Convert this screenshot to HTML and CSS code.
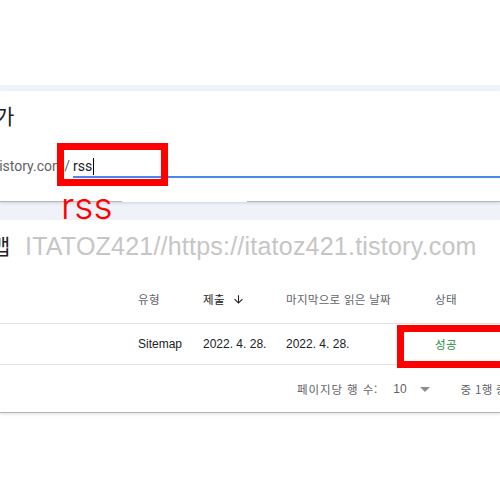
FILE: index.html
```html
<!DOCTYPE html>
<html lang="ko">
<head>
<meta charset="utf-8">
<title>Sitemaps</title>
<link rel="stylesheet" href="styles.css">
</head>
<body>
<div class="page">
  <div class="topspace"></div>
  <main class="stage">
    <section class="card card-add">
      <h2 class="card-title title-add">가</h2>
      <div class="input-row">
        <div class="prefix"><span>https://itatoz421.tistory.com/</span></div>
        <div class="field"><span class="value">rss</span><span class="caret"></span></div>
      </div>
    </section>
    <section class="card card-list">
      <h2 class="card-title title-list">맵</h2>
      <div class="grid-row head">
        <span></span>
        <span class="ko">유형</span>
        <span class="ko sorted">제출<svg class="arrow" viewBox="0 0 24 24"><path d="M20 12l-1.41-1.41L13 16.17V4h-2v12.17l-5.58-5.59L4 12l8 8 8-8z"/></svg></span>
        <span class="ko">마지막으로 읽은 날짜</span>
        <span class="ko">상태</span>
      </div>
      <div class="grid-row data">
        <span></span>
        <span>Sitemap</span>
        <span>2022. 4. 28.</span>
        <span>2022. 4. 28.</span>
        <span class="ko ok">성공</span>
      </div>
      <div class="pager">
        <span class="ko per-page">페이지당 행 수:</span>
        <span class="count">10</span>
        <svg class="dd" viewBox="0 0 24 24"><path d="M7 10l5 5 5-5z"/></svg>
        <span class="ko range">중 1행 중 1</span>
      </div>
    </section>
  </main>
  <div class="mark-box box-input"></div>
  <div class="mark-strip"></div>
  <div class="mark-text">rss</div>
  <div class="watermark">ITATOZ421//https://itatoz421.tistory.com</div>
  <div class="mark-box box-status"></div>
</div>
</body>
</html>
```

FILE: styles.css
```css
html, body {
  margin: 0;
  padding: 0;
  background: #ffffff;
}
body {
  width: 500px;
  height: 500px;
  overflow: hidden;
  font-family: Roboto, "Noto Sans CJK KR", sans-serif;
  color: #202124;
}
.page {
  position: relative;
  width: 500px;
  height: 500px;
  overflow: hidden;
}
.topspace {
  height: 85px;
}
.stage {
  background: #eff2f8;
  padding-top: 6px;
}
.card {
  background: #ffffff;
  box-shadow: 0 1px 0 #b3b6bb, 0 2px 3px rgba(60, 64, 67, 0.18);
}
.card-add {
  padding: 10px 0 23px 0;
}
.card-list {
  margin-top: 19px;
  padding-top: 11px;
}
.card-title {
  margin: 0;
  font-family: "Noto Sans CJK KR", sans-serif;
  font-weight: 400;
  font-size: 21px;
  line-height: 28px;
  color: #202124;
  white-space: nowrap;
}
.title-add {
  margin-left: -5px;
}
.title-list {
  margin-left: -9px;
}
.input-row {
  margin-top: 27px;
  display: flex;
  align-items: flex-end;
  height: 22px;
}
.prefix {
  width: 70px;
  flex: none;
  display: flex;
  justify-content: flex-end;
  overflow: hidden;
  white-space: nowrap;
  font-size: 14px;
  line-height: 20px;
  color: #5f6368;
  padding-bottom: 2px;
}
.field {
  flex: 1;
  margin-left: 3px;
  display: flex;
  align-items: center;
  height: 20px;
  border-bottom: 2px solid #4a86f0;
  font-size: 14px;
  line-height: 20px;
  color: #202124;
}
.caret {
  display: inline-block;
  width: 1px;
  height: 17px;
  background: #000;
  margin-left: 1px;
}
.grid-row {
  display: grid;
  grid-template-columns: 138px 65px 83px 149px 1fr;
  align-items: center;
  border-bottom: 1px solid #e0e0e0;
  font-family: "Liberation Sans", "Noto Sans CJK KR", sans-serif;
  font-size: 12px;
  white-space: nowrap;
}
.head {
  margin-top: 16px;
  height: 48px;
  color: #5f6368;
}
.data {
  height: 40px;
  color: #202124;
}
.ko {
  font-family: "Noto Sans CJK KR", sans-serif;
  font-size: 11.5px;
  letter-spacing: 0.3px;
}
.sorted {
  display: flex;
  align-items: center;
  color: #202124;
}
.arrow {
  width: 13px;
  height: 13px;
  margin-left: 7px;
  fill: #202124;
}
.ok {
  color: #1e8e3e;
}
.pager {
  height: 47px;
  display: flex;
  align-items: center;
  padding-left: 297px;
  white-space: nowrap;
  color: #5f6368;
  font-family: "Liberation Sans", "Noto Sans CJK KR", sans-serif;
  font-size: 12px;
}
.pager .per-page {
  letter-spacing: 0.9px;
}
.count {
  margin-left: 15px;
  color: #5f6368;
}
.dd {
  width: 24px;
  height: 24px;
  margin-left: 6px;
  fill: #8a8d91;
  flex: none;
}
.range {
  margin-left: 24px;
}
.mark-box {
  position: absolute;
  border: 7px solid #ff0000;
  box-sizing: border-box;
}
.box-input {
  left: 57px;
  top: 143px;
  width: 111px;
  height: 43px;
}
.box-status {
  left: 397px;
  top: 325px;
  width: 112px;
  height: 43px;
}
.mark-strip {
  position: absolute;
  left: 122px;
  top: 198px;
  width: 125px;
  height: 4px;
  background: #ffffff;
}
.mark-text {
  position: absolute;
  left: 61px;
  top: 186px;
  font-family: Inter, "Liberation Sans", sans-serif;
  font-weight: 300;
  font-size: 37px;
  line-height: 40px;
  color: #ff0000;
}
.watermark {
  position: absolute;
  left: 25px;
  top: 234px;
  font-family: "Liberation Sans", sans-serif;
  font-size: 25px;
  line-height: 25px;
  letter-spacing: 0.22px;
  color: #c6c6c6;
  white-space: nowrap;
}
```
